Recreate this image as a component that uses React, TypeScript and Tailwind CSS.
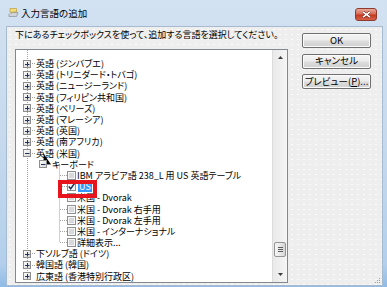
type Row = {
  level: 0 | 1 | 2;
  text: string;
  toggle?: "plus" | "minus";
  check?: "off" | "on";
  selected?: boolean;
};

const rows: Row[] = [
  { level: 0, text: "英語 (ジンバブエ)", toggle: "plus" },
  { level: 0, text: "英語 (トリニダード・トバゴ)", toggle: "plus" },
  { level: 0, text: "英語 (ニュージーランド)", toggle: "plus" },
  { level: 0, text: "英語 (フィリピン共和国)", toggle: "plus" },
  { level: 0, text: "英語 (ベリーズ)", toggle: "plus" },
  { level: 0, text: "英語 (マレーシア)", toggle: "plus" },
  { level: 0, text: "英語 (英国)", toggle: "plus" },
  { level: 0, text: "英語 (南アフリカ)", toggle: "plus" },
  { level: 0, text: "英語 (米国)", toggle: "minus" },
  { level: 1, text: "キーボード", toggle: "minus" },
  { level: 2, text: "IBM アラビア語 238_L 用 US 英語テーブル", check: "off" },
  { level: 2, text: "US", check: "on", selected: true },
  { level: 2, text: "米国 - Dvorak", check: "off" },
  { level: 2, text: "米国 - Dvorak 右手用", check: "off" },
  { level: 2, text: "米国 - Dvorak 左手用", check: "off" },
  { level: 2, text: "米国 - インターナショナル", check: "off" },
  { level: 2, text: "詳細表示...", check: "off" },
  { level: 0, text: "下ソルブ語 (ドイツ)", toggle: "plus" },
  { level: 0, text: "韓国語 (韓国)", toggle: "plus" },
  { level: 0, text: "広東語 (香港特別行政区)", toggle: "plus" },
];

const indent = ["w-0", "w-[16px]", "w-[32px]"];
const ROW = 11.2;
const TOP = 8;
const lineY = (i: number) => Math.floor(TOP + i * ROW + ROW / 2) + 0.5;

function Expander({ open }: { open: boolean }) {
  return (
    <svg width="8" height="8" viewBox="0 0 8 8" className="relative">
      <defs>
        <linearGradient id="exp" x1="0" y1="0" x2="1" y2="1">
          <stop offset="0" stopColor="#ffffff" />
          <stop offset="1" stopColor="#d4d4d4" />
        </linearGradient>
      </defs>
      <rect x="0.5" y="0.5" width="7" height="7" fill="url(#exp)" stroke="#8e8e8e" />
      <path d="M2 4.5H6.5" stroke="#23355a" />
      {!open && <path d="M4.5 2V6.5" stroke="#23355a" />}
    </svg>
  );
}

function Checkbox({ on }: { on: boolean }) {
  return (
    <svg width="9" height="9" viewBox="0 0 9 9" className="shrink-0">
      <rect x="0.5" y="0.5" width="8" height="8" fill="#f6f6f6" stroke="#8f8f8f" />
      <rect x="2" y="2" width="5" height="5" fill={on ? "#eef2f7" : "#d6d8dc"} />
      {on && <path d="M1.8 4.6L3.7 6.7L7.4 1.6" fill="none" stroke="#1d2f55" strokeWidth="1.5" />}
    </svg>
  );
}

function TreeLines() {
  const h = 224;
  return (
    <svg width="256" height={h} className="pointer-events-none absolute left-0 top-0" stroke="#a3a3a3" strokeDasharray="1 1">
      <path d={`M11.5 0V${h}`} />
      {rows.map((r, i) =>
        r.level === 0 ? <path key={i} d={`M12 ${lineY(i)}H19`} /> : null,
      )}
      <path d={`M27.5 ${lineY(8)}V${lineY(9)}H35`} />
      <path d={`M43.5 ${lineY(9)}V${lineY(16)}`} />
      {rows.map((r, i) =>
        r.level === 2 ? <path key={`c${i}`} d={`M44 ${lineY(i)}H51`} /> : null,
      )}
    </svg>
  );
}

function Button({ children }: { children: React.ReactNode }) {
  return (
    <div className="flex h-[15px] w-[69px] items-center justify-center rounded-[2px] border border-[#707070] bg-[linear-gradient(#f4f4f4,#ececec_48%,#dddddd_52%,#d0d0d0)] text-[9.5px] leading-none shadow-[inset_0_0_0_1px_#fbfbfb]">
      {children}
    </div>
  );
}

export default function App() {
  return (
    <div className="flex h-[287px] w-[387px] flex-col overflow-hidden bg-[linear-gradient(180deg,#d3e2f2,#c4d8ed_55%,#b3cfec_92%,#8fbbe6)] font-['Noto_Sans_CJK_JP','Liberation_Sans',sans-serif] text-black [font-feature-settings:'palt']">
      <div className="flex h-[26px] shrink-0 items-start pl-[8px]">
        <svg width="11" height="11" viewBox="0 0 11 11" className="mt-[7px]">
          <path d="M1 7.5L3 5.5H10L8.5 9.5H1Z" fill="#cfd3d8" stroke="#7d8590" strokeWidth="0.6" />
          <path d="M2 1.5H8.5V5H5L3.5 6.3V5H2Z" fill="#f3dd7a" stroke="#b39330" strokeWidth="0.6" />
        </svg>
        <span className="ml-[2px] mt-[7px] text-[9.5px] leading-[12px]">入力言語の追加</span>
        <div className="ml-auto mr-[10px] mt-[8px] flex h-[13px] w-[22px] items-center justify-center rounded-[3px] border border-[#8d3b2c] bg-[linear-gradient(#eaa99b,#d86a55_45%,#c4381f_55%,#d7624a)]">
          <svg width="9" height="7" viewBox="0 0 9 7">
            <path d="M1 0.8L8 6.2M8 0.8L1 6.2" stroke="#5a1d12" strokeWidth="2.6" />
            <path d="M1 0.8L8 6.2M8 0.8L1 6.2" stroke="#ffffff" strokeWidth="1.6" />
          </svg>
        </div>
      </div>

      <div className="relative mb-[9px] ml-[6px] mr-[4px] flex flex-1 gap-[14px] border border-[#a6bad0] bg-[#eeeeee] bg-[radial-gradient(#fbfbfb_0.6px,transparent_0.9px)] bg-[size:6px_5px] pl-[8px] pr-[11px]">
        <div className="flex w-[273px] flex-col pt-[2px]">
          <p className="h-[12px] whitespace-nowrap text-[9px] leading-[12px]">
            下にあるチェックボックスを使って、追加する言語を選択してください。
          </p>
          <div className="mb-[2px] mt-[8px] flex flex-1 border border-[#828790] bg-white">
            <div className="relative flex-1 overflow-hidden pl-[3px] pt-[8px]">
              <TreeLines />
              {rows.map((r, i) => (
                <div key={i} className="relative flex h-[11.2px] items-center whitespace-nowrap text-[9px] leading-[11px]">
                  <div className={indent[r.level]} />
                  <div className="flex w-[16px] shrink-0 justify-center">
                    {r.toggle && <Expander open={r.toggle === "minus"} />}
                  </div>
                  {r.check && <Checkbox on={r.check === "on"} />}
                  <span className={r.selected ? "ml-[2px] bg-[#3399ff] px-[1px] text-white" : "ml-[1px]"}>{r.text}</span>
                </div>
              ))}
              <div className="absolute left-[42px] top-[130px] h-[18px] w-[39px] border-[4px] border-[#e8141d]" />
            </div>
            <div className="flex w-[15px] flex-col border-l border-[#dcdcdc] bg-[linear-gradient(90deg,#e9e9e9,#f5f5f5)]">
              <div className="flex h-[15px] items-center justify-center">
                <svg width="5" height="3" viewBox="0 0 5 3">
                  <path d="M0 3L2.5 0L5 3Z" fill="#3c3c3c" />
                </svg>
              </div>
              <div className="flex flex-1 flex-col justify-end">
                <div className="mx-[1px] mb-[10px] flex h-[15px] flex-col items-center justify-center gap-[1px] rounded-[2px] border border-[#959595] bg-[linear-gradient(90deg,#f6f6f6,#e6e6e6_60%,#d4d4d4)]">
                  <div className="h-px w-[5px] bg-[#5b5b5b]" />
                  <div className="h-px w-[5px] bg-[#5b5b5b]" />
                  <div className="h-px w-[5px] bg-[#5b5b5b]" />
                </div>
              </div>
              <div className="flex h-[15px] items-center justify-center">
                <svg width="5" height="3" viewBox="0 0 5 3">
                  <path d="M0 0L2.5 3L5 0Z" fill="#3c3c3c" />
                </svg>
              </div>
            </div>
          </div>
        </div>

        <div className="flex w-[69px] flex-col gap-[5.5px] pt-[6px]">
          <Button>OK</Button>
          <Button>キャンセル</Button>
          <Button>
            プレビュー(<span className="underline">P</span>)...
          </Button>
        </div>

        <svg width="7" height="7" viewBox="0 0 7 7" className="absolute bottom-[1px] right-[1px]" fill="#a0a0a0">
          <rect x="5" y="1" width="1" height="1" />
          <rect x="3" y="3" width="1" height="1" />
          <rect x="5" y="3" width="1" height="1" />
          <rect x="1" y="5" width="1" height="1" />
          <rect x="3" y="5" width="1" height="1" />
          <rect x="5" y="5" width="1" height="1" />
        </svg>
      </div>
    </div>
  );
}
